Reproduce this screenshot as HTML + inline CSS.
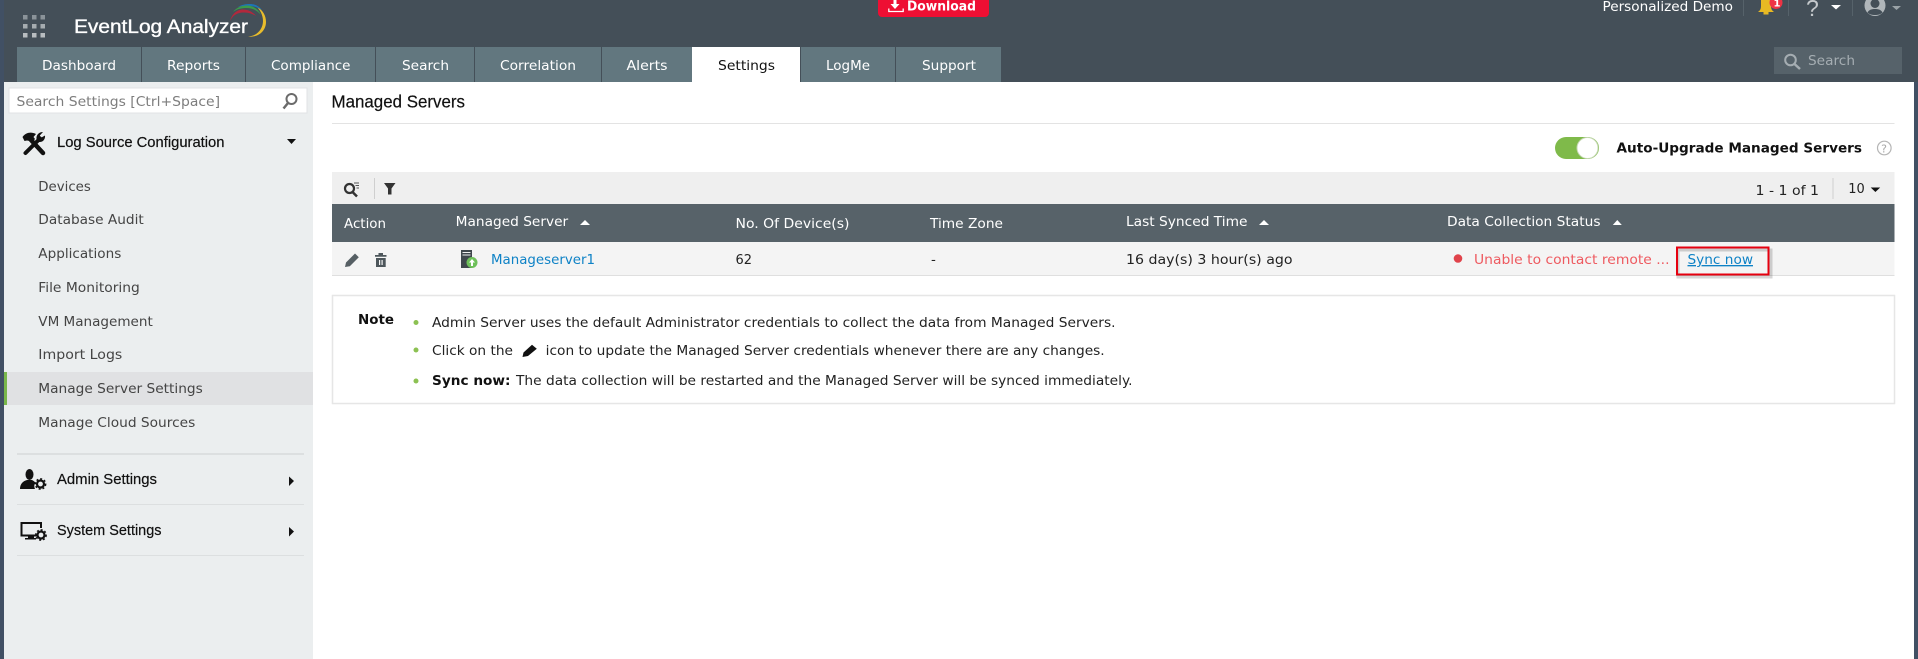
<!DOCTYPE html>
<html lang="en">
<head>
<meta charset="utf-8">
<title>Managed Servers</title>
<style>
html,body{margin:0;padding:0;background:#fff;width:1918px;height:659px;overflow:hidden}
svg{display:block}
text{font-family:"DejaVu Sans","Liberation Sans",sans-serif;font-size:13.5px;fill:#222;white-space:pre}
.l{font-family:"Liberation Sans",sans-serif;font-size:15px;fill:#111;stroke:#111;stroke-width:.2px}
.tab{fill:#fff}
.side{fill:#444}
.hd{fill:#fff}
</style>
</head>
<body>
<svg width="1918" height="659" viewBox="0 0 1918 659" xmlns="http://www.w3.org/2000/svg">
<!-- frame -->
<rect width="1918" height="659" fill="#fff"/>
<rect width="1918" height="82" fill="#444f58"/>
<rect x="0" y="0" width="4" height="659" fill="#415064"/>
<rect x="1914" y="82" width="4" height="577" fill="#415064"/>

<!-- app grid -->
<g fill="#a6acb0">
<rect x="23" y="15" width="4.5" height="4.5" fill="#8b9399"/><rect x="32" y="15" width="4.5" height="4.5" fill="#8b9399"/><rect x="40.5" y="15" width="4.5" height="4.5" fill="#8b9399"/>
<rect x="23" y="24" width="4.5" height="4.5"/><rect x="32" y="24" width="4.5" height="4.5"/><rect x="40.5" y="24" width="4.5" height="4.5"/>
<rect x="23" y="33" width="4.5" height="4.5" fill="#b8bdc0"/><rect x="32" y="33" width="4.5" height="4.5" fill="#b8bdc0"/><rect x="40.5" y="33" width="4.5" height="4.5" fill="#b8bdc0"/>
</g>
<!-- logo -->
<text x="74" y="33" class="l" style="font-size:19px;fill:#fff;stroke:#fff;stroke-width:.35px" textLength="174" lengthAdjust="spacingAndGlyphs">EventLog Analyzer</text>
<path d="M248 36.5C258 36 263 28 263 21C263 15 260 10 257 7C263 10 266 16 266 22C266 31 258 38 248 36.5Z" fill="#e8bc2c"/>
<path d="M238 7C242 4.5 246 4 250 4C255 4 259 6 262 10C258 7.5 254 6 250 6C246 6 242 6 238 7Z" fill="#1c75b8"/>
<path d="M233 12C237 7 242 5.5 247 5.5C253 5.5 258 9 261 15C257 10 252 8 247 8C241 8 237 9 233 12Z" fill="#3c9a4a"/>
<path d="M230 21C232 13 238 9.5 243 9.5C248 9.5 253 12 256 16C251 13 247 12.5 243 12.5C238 12.5 233 15 230 21Z" fill="#b3283c"/>

<!-- tabs -->
<g fill="#62777f">
<rect x="17" y="47" width="124" height="35"/>
<rect x="142" y="47" width="103" height="35"/>
<rect x="246" y="47" width="129" height="35"/>
<rect x="376" y="47" width="98" height="35"/>
<rect x="475" y="47" width="126" height="35"/>
<rect x="602" y="47" width="90" height="35"/>
<rect x="801" y="47" width="94" height="35"/>
<rect x="896" y="47" width="105" height="35"/>
</g>
<rect x="692" y="47" width="108" height="35" fill="#fff"/>
<text x="42" y="70" class="tab" textLength="74" lengthAdjust="spacingAndGlyphs">Dashboard</text>
<text x="167" y="70" class="tab" textLength="53" lengthAdjust="spacingAndGlyphs">Reports</text>
<text x="271" y="70" class="tab" textLength="79.5" lengthAdjust="spacingAndGlyphs">Compliance</text>
<text x="402" y="70" class="tab" textLength="47" lengthAdjust="spacingAndGlyphs">Search</text>
<text x="500" y="70" class="tab" textLength="76" lengthAdjust="spacingAndGlyphs">Correlation</text>
<text x="626.5" y="70" class="tab" textLength="41" lengthAdjust="spacingAndGlyphs">Alerts</text>
<text x="718" y="70" style="fill:#111" textLength="57" lengthAdjust="spacingAndGlyphs">Settings</text>
<text x="826" y="70" class="tab" textLength="44" lengthAdjust="spacingAndGlyphs">LogMe</text>
<text x="922" y="70" class="tab" textLength="54" lengthAdjust="spacingAndGlyphs">Support</text>

<!-- download -->
<path d="M878 0H989V13a4 4 0 0 1-4 4H882a4 4 0 0 1-4-4Z" fill="#ee0f33"/>
<path d="M893.500 0h3v4h3l-4.500 5-4.500-5h3Z" fill="#fff"/>
<path d="M888.800 8.500v3h14.400v-3" fill="none" stroke="#fff" stroke-width="1.300"/>
<text x="907" y="10.500" style="font-weight:700;fill:#fff;font-size:13px" textLength="69" lengthAdjust="spacingAndGlyphs">Download</text>

<!-- top right -->
<text x="1602.500" y="11" class="tab" textLength="130.500" lengthAdjust="spacingAndGlyphs">Personalized Demo</text>
<g fill="#56626a">
<rect x="1743" y="0" width="1" height="16"/><rect x="1788" y="0" width="1" height="16"/><rect x="1852" y="0" width="1" height="16"/>
</g>
<path d="M1761 0H1771V6C1771 9 1772 10.500 1774 12H1758C1760 10.500 1761 9 1761 6Z" fill="#e8b923"/>
<rect x="1763.500" y="12" width="5" height="2.500" fill="#e8b923"/>
<circle cx="1776" cy="2.500" r="6.500" fill="#ee3344"/>
<text x="1773.500" y="6.500" style="font-size:10px;font-weight:700;fill:#fff">1</text>
<text x="1806" y="16" class="l" style="font-size:23px;fill:#c5c9cc;stroke:none">?</text>
<path d="M1831 5H1841L1836 9.500Z" fill="#fff"/>
<circle cx="1875" cy="5.500" r="10.500" fill="#b0b6ba"/>
<circle cx="1875" cy="3.500" r="4.500" fill="#444f58"/>
<path d="M1867.500 12.500C1869 9.500 1872 9 1875 9C1878 9 1881 9.500 1882.500 12.500C1880.500 14.500 1878 15 1875 15C1872 15 1869.500 14.500 1867.500 12.500Z" fill="#444f58"/>
<path d="M1892 6H1901L1896.500 10Z" fill="#9aa2a7"/>

<!-- top search -->
<rect x="1774" y="47" width="128" height="27" fill="#56626a"/>
<circle cx="1790.500" cy="60" r="5.300" fill="none" stroke="#a5adb2" stroke-width="2"/>
<path d="M1794.500 64L1800 69" stroke="#a5adb2" stroke-width="2.500"/>
<text x="1808" y="65" style="fill:#a5adb2" textLength="47" lengthAdjust="spacingAndGlyphs">Search</text>

<!-- sidebar -->
<rect x="4" y="82" width="309" height="577" fill="#ebeeef"/>
<rect x="9" y="88" width="298" height="25" fill="#fff" stroke="#e0e3e5" stroke-width="1"/>
<text x="16.500" y="106" style="fill:#7d7d7d" textLength="203.500" lengthAdjust="spacingAndGlyphs">Search Settings [Ctrl+Space]</text>
<circle cx="291.500" cy="99" r="5" fill="none" stroke="#6b6b6b" stroke-width="2"/>
<path d="M288 103L283.500 108.500" stroke="#6b6b6b" stroke-width="2.500"/>

<!-- tools icon -->
<g fill="none" stroke="#111" stroke-linecap="round">
<path d="M25.500 153L40 138.500" stroke-width="4"/>
<path d="M31 140L43 153" stroke-width="4.500"/>
</g>
<path d="M22.500 137C25.500 132.500 31 131.500 36 134L33.500 137L35 139L31.500 143L29.500 141L27 140.500L24.500 141Z" fill="#111"/>
<path d="M45 135.500C45.500 139 43 142.500 39 142L36.500 139C36 135 39 132 43 132L39.800 135.500L41 137.800Z" fill="#111"/>
<text x="57" y="147" class="l" textLength="167.500" lengthAdjust="spacingAndGlyphs">Log Source Configuration</text>
<path d="M287 139H296L291.500 144Z" fill="#111"/>

<text x="38.300" y="191" class="side" textLength="52.500" lengthAdjust="spacingAndGlyphs">Devices</text>
<text x="38.300" y="224" class="side" textLength="105.500" lengthAdjust="spacingAndGlyphs">Database Audit</text>
<text x="38.300" y="258" class="side" textLength="83" lengthAdjust="spacingAndGlyphs">Applications</text>
<text x="38.300" y="292" class="side" textLength="101.500" lengthAdjust="spacingAndGlyphs">File Monitoring</text>
<text x="38.300" y="326" class="side" textLength="114.500" lengthAdjust="spacingAndGlyphs">VM Management</text>
<text x="38.300" y="359" class="side" textLength="84" lengthAdjust="spacingAndGlyphs">Import Logs</text>
<rect x="4" y="372" width="309" height="33" fill="#e0e1e3"/>
<rect x="4" y="372" width="3" height="33" fill="#79b74a"/>
<text x="38.300" y="393" class="side" textLength="164.500" lengthAdjust="spacingAndGlyphs">Manage Server Settings</text>
<text x="38.300" y="427" class="side" textLength="157" lengthAdjust="spacingAndGlyphs">Manage Cloud Sources</text>

<rect x="17" y="453" width="287" height="2" fill="#dcdfe0"/>
<rect x="17" y="504" width="287" height="1" fill="#dcdfe0"/>
<rect x="17" y="555" width="287" height="1" fill="#dcdfe0"/>

<!-- admin icon -->
<ellipse cx="29.500" cy="474.500" rx="4" ry="5.500" fill="#111"/>
<path d="M20 489C20 484 23 481 27 480H32C34 481 35 482 35.500 483C34 484.500 34 486.500 35 489Z" fill="#111"/>
<circle cx="40.500" cy="484" r="3.500" fill="none" stroke="#111" stroke-width="2.200"/>
<circle cx="40.500" cy="484" r="5.200" fill="none" stroke="#111" stroke-width="1.400" stroke-dasharray="2 2"/>
<text x="57" y="484" class="l" textLength="100" lengthAdjust="spacingAndGlyphs">Admin Settings</text>
<path d="M289 476.500L294 481L289 486Z" fill="#111"/>

<!-- system icon -->
<path d="M37 535.500H21.500V523H41V528" fill="none" stroke="#111" stroke-width="2"/>
<rect x="28" y="536" width="6" height="2" fill="#111"/>
<rect x="25" y="538" width="11" height="1.500" fill="#111"/>
<circle cx="41" cy="535" r="3.500" fill="none" stroke="#111" stroke-width="2.200"/>
<circle cx="41" cy="535" r="5.200" fill="none" stroke="#111" stroke-width="1.400" stroke-dasharray="2 2"/>
<text x="57" y="535" class="l" textLength="104.500" lengthAdjust="spacingAndGlyphs">System Settings</text>
<path d="M289 527L294 531.500L289 536.500Z" fill="#111"/>

<!-- content head -->
<text x="331.500" y="107.500" class="l" style="font-size:17.500px" textLength="133.500" lengthAdjust="spacingAndGlyphs">Managed Servers</text>
<rect x="332" y="123" width="1562.500" height="1" fill="#e3e3e3"/>

<!-- toggle -->
<rect x="1555" y="137" width="44" height="22" rx="11" fill="#7fba4a"/>
<circle cx="1587.500" cy="148" r="10.500" fill="#fff" stroke="#c6d8b4" stroke-width="1"/>
<text x="1616.500" y="152.500" style="font-weight:700;fill:#111" textLength="245.500" lengthAdjust="spacingAndGlyphs">Auto-Upgrade Managed Servers</text>
<circle cx="1884.300" cy="148" r="6.800" fill="none" stroke="#b5b5b5" stroke-width="1.200"/>
<text x="1881.100" y="152.500" style="font-size:11px;fill:#a8a8a8">?</text>

<!-- toolbar -->
<rect x="332" y="172" width="1562.500" height="32" fill="#efefef"/>
<circle cx="349.500" cy="188.500" r="4.500" fill="none" stroke="#333" stroke-width="2.200"/>
<path d="M352.500 192L357 196.500" stroke="#333" stroke-width="2.500"/>
<path d="M354 183H359M355.500 185.500H359M356.500 188H359" stroke="#555" stroke-width="1"/>
<rect x="374" y="178" width="1" height="21" fill="#cfcfcf"/>
<path d="M384 183H395.500L391.500 188.500V194.500H388V188.500Z" fill="#333"/>
<text x="1755.500" y="195" style="fill:#222" textLength="63.500" lengthAdjust="spacingAndGlyphs">1 - 1 of 1</text>
<rect x="1832.500" y="178" width="1" height="21" fill="#cfcfcf"/>
<text x="1848.300" y="193" style="fill:#222" textLength="16.500" lengthAdjust="spacingAndGlyphs">10</text>
<path d="M1870.700 187.500H1880.200L1875.400 192Z" fill="#111"/>

<!-- table header -->
<rect x="332" y="204" width="1562.500" height="38" fill="#576269"/>
<text x="344" y="228" class="hd" textLength="42" lengthAdjust="spacingAndGlyphs">Action</text>
<text x="455.700" y="226" class="hd" textLength="112.500" lengthAdjust="spacingAndGlyphs">Managed Server</text>
<path d="M580 225L585 220L590 225Z" fill="#fff"/>
<text x="735.500" y="228" class="hd" textLength="114" lengthAdjust="spacingAndGlyphs">No. Of Device(s)</text>
<text x="930" y="228" class="hd" textLength="73" lengthAdjust="spacingAndGlyphs">Time Zone</text>
<text x="1126" y="226" class="hd" textLength="121.500" lengthAdjust="spacingAndGlyphs">Last Synced Time</text>
<path d="M1259 225L1264 220L1269 225Z" fill="#fff"/>
<text x="1447" y="226" class="hd" textLength="153.500" lengthAdjust="spacingAndGlyphs">Data Collection Status</text>
<path d="M1612.800 225L1617.300 220L1621.800 225Z" fill="#fff"/>

<!-- row -->
<rect x="332" y="242" width="1562.500" height="33" fill="#f4f4f4"/>
<rect x="332" y="275" width="1562.500" height="1" fill="#dfdfdf"/>
<path d="M345 267L346 262.500L355 253.500L358.800 257.200L349.800 266.200Z" fill="#565f64"/>
<path d="M375 255H386.500V256.800H375ZM378.500 253H383V255H378.500ZM376 258H385.700V267H376Z" fill="#4d565b"/>
<path d="M379 260H380.200V265H379ZM381.500 260H382.700V265H381.500Z" fill="#f4f4f4"/>
<rect x="461" y="250" width="11" height="18" fill="#3f474c"/>
<path d="M462.500 252.500H470.500M462.500 255H470.500" stroke="#eee" stroke-width="1"/>
<circle cx="472" cy="262.500" r="5.500" fill="#6ec05a"/>
<path d="M472 259L475 262.500H473V266H471V262.500H469Z" fill="#fff"/>
<text x="491" y="264" style="fill:#0e82c6" textLength="104" lengthAdjust="spacingAndGlyphs">Manageserver1</text>
<text x="735.500" y="264" textLength="16.500" lengthAdjust="spacingAndGlyphs">62</text>
<text x="931" y="264">-</text>
<text x="1126" y="264" textLength="166.500" lengthAdjust="spacingAndGlyphs">16 day(s) 3 hour(s) ago</text>
<circle cx="1458" cy="258.500" r="4.300" fill="#e0434b"/>
<text x="1474" y="264" style="fill:#ee5a60" textLength="195.500" lengthAdjust="spacingAndGlyphs">Unable to contact remote ...</text>
<text x="1687.500" y="264" style="fill:#0e82c6;text-decoration:underline" textLength="65.500" lengthAdjust="spacingAndGlyphs">Sync now</text>
<rect x="1678" y="250" width="93" height="27" fill="none" stroke="#000" stroke-opacity=".16" stroke-width="3"/>
<rect x="1677" y="247.500" width="91.500" height="27" fill="none" stroke="#e6000f" stroke-width="2"/>

<!-- note -->
<rect x="332.500" y="295.500" width="1562" height="108" fill="#fff" stroke="#e6e6e6" stroke-width="1.500"/>
<text x="358" y="324" style="font-weight:700;fill:#111" textLength="36" lengthAdjust="spacingAndGlyphs">Note</text>
<g fill="#8cc152">
<circle cx="416" cy="322.500" r="2.500"/><circle cx="416" cy="350" r="2.500"/><circle cx="416" cy="381" r="2.500"/>
</g>
<text x="432" y="327" textLength="683.500" lengthAdjust="spacingAndGlyphs">Admin Server uses the default Administrator credentials to collect the data from Managed Servers.</text>
<text x="432" y="355" textLength="81" lengthAdjust="spacingAndGlyphs">Click on the</text>
<path d="M522.500 357L523.500 352.500L532 344.800L536.800 348.800L528 356Z" fill="#111"/>
<text x="545.700" y="355" textLength="559" lengthAdjust="spacingAndGlyphs">icon to update the Managed Server credentials whenever there are any changes.</text>
<text x="432" y="385" style="font-weight:700;fill:#111" textLength="78.500" lengthAdjust="spacingAndGlyphs">Sync now:</text>
<text x="516" y="385" textLength="616.500" lengthAdjust="spacingAndGlyphs">The data collection will be restarted and the Managed Server will be synced immediately.</text>
</svg>
</body>
</html>
